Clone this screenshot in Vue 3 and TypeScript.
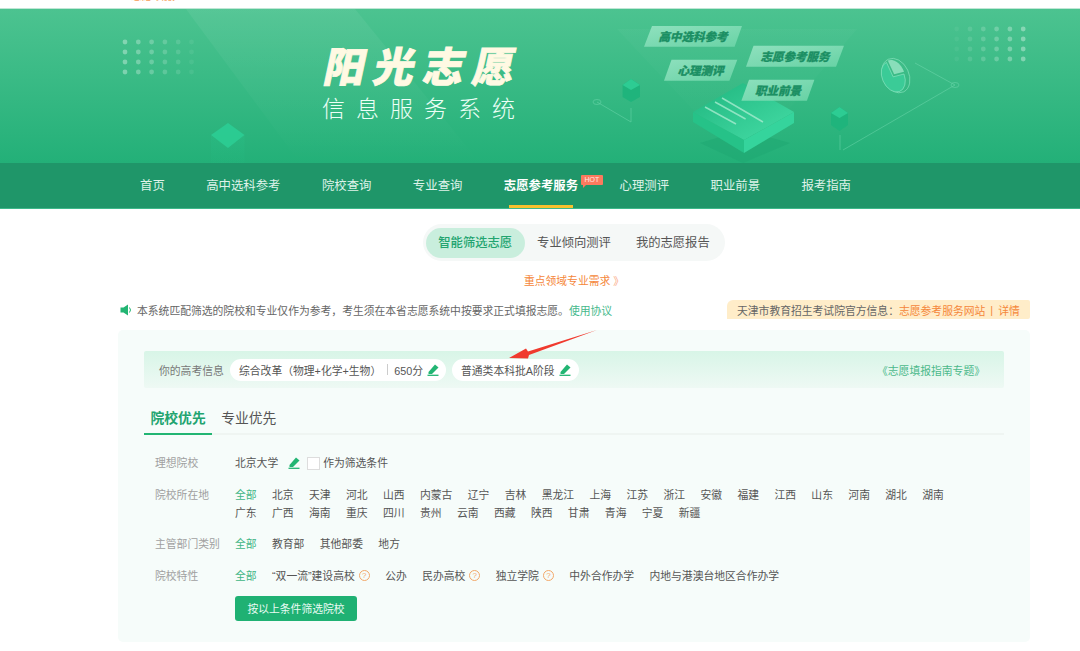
<script setup lang="ts">
interface FilterItem {
  name: string
  tip?: boolean
}

const navItems = ['首页', '高中选科参考', '院校查询', '专业查询', '志愿参考服务', '心理测评', '职业前景', '报考指南']
const activeNav = '志愿参考服务'
const subTabs = ['智能筛选志愿', '专业倾向测评', '我的志愿报告']

const regions: FilterItem[] = [
  '全部', '北京', '天津', '河北', '山西', '内蒙古', '辽宁', '吉林', '黑龙江', '上海', '江苏', '浙江', '安徽', '福建', '江西', '山东', '河南', '湖北', '湖南',
  '广东', '广西', '海南', '重庆', '四川', '贵州', '云南', '西藏', '陕西', '甘肃', '青海', '宁夏', '新疆',
].map((name) => ({ name }))

const departments: FilterItem[] = ['全部', '教育部', '其他部委', '地方'].map((name) => ({ name }))

const features: FilterItem[] = [
  { name: '全部' },
  { name: '“双一流”建设高校', tip: true },
  { name: '公办' },
  { name: '民办高校', tip: true },
  { name: '独立学院', tip: true },
  { name: '中外合作办学' },
  { name: '内地与港澳台地区合作办学' },
]

const filterRows = [
  { label: '院校所在地', items: regions },
  { label: '主管部门类别', items: departments },
  { label: '院校特性', items: features },
]

// banner decoration, coordinates are page pixels (viewBox starts at y=9)
const dotCols = [0, 1, 2, 3, 4, 5]
const dotRows = [0, 1, 2, 3]

const bannerTags = [
  { text: '高中选科参考', points: '644,46.7 652,26 742,26 734.6,46.7', x: 693, y: 40.5 },
  { text: '志愿参考服务', points: '746,66.7 753.5,45.7 844,45.7 836,66.7', x: 795, y: 60.5 },
  { text: '心理测评', points: '664,80.7 671.5,59.7 737.3,59.7 729.4,80.7', x: 700.5, y: 74.5 },
  { text: '职业前景', points: '741.4,100.7 749,79.7 814.4,79.7 806.9,100.7', x: 778, y: 94.5 },
]

const penPath = 'M1.5 8 L8 0.5 L11.5 3.5 L5 10 L1.5 10 Z'
</script>

<template>
  <div class="page">
    <div class="topbar"><span class="top-link">志愿填报</span></div>

    <header class="banner">
      <svg class="banner-art" viewBox="0 9 1080 154" xmlns="http://www.w3.org/2000/svg">
        <defs>
          <linearGradient id="spot" x1="0" y1="0" x2="0" y2="1">
            <stop offset="0" stop-color="#fff" stop-opacity="0.06" />
            <stop offset="1" stop-color="#fff" stop-opacity="0" />
          </linearGradient>
          <linearGradient id="beam" x1="0" y1="0" x2="0" y2="1">
            <stop offset="0" stop-color="#fff" stop-opacity="0.025" />
            <stop offset="1" stop-color="#fff" stop-opacity="0" />
          </linearGradient>
          <linearGradient id="bookTop" x1="0" y1="0" x2="1" y2="1">
            <stop offset="0" stop-color="#1fb57e" />
            <stop offset="1" stop-color="#45dda6" />
          </linearGradient>
          <linearGradient id="tagFill" x1="0" y1="0" x2="1" y2="1">
            <stop offset="0" stop-color="#9be6c6" />
            <stop offset="1" stop-color="#6fd6aa" />
          </linearGradient>
          <linearGradient id="cubeSide" x1="0" y1="0" x2="0" y2="1">
            <stop offset="0" stop-color="#27c48b" stop-opacity="0.8" />
            <stop offset="1" stop-color="#27c48b" stop-opacity="0.2" />
          </linearGradient>
        </defs>

        <!-- Background bands -->
        <polygon points="186,9 210,9 330,163 300,163" fill="url(#spot)" />
        <polygon points="210,9 355,9 480,163 330,163" fill="url(#spot)" />
        <polygon points="617,29 857,29 743,163" fill="url(#beam)" />

        <!-- Dots -->
        <g fill="#fff">
          <template v-for="c in dotCols" :key="c">
            <circle
              v-for="r in dotRows"
              :key="r"
              :cx="125 + c * 13.3"
              :cy="42 + r * 10"
              r="2.4"
              :opacity="0.34 - c * 0.055"
            />
            <circle
              v-for="r in dotRows"
              :key="'b' + r"
              :cx="956.7 + c * 13.3"
              :cy="29 + r * 10"
              r="2.4"
              :opacity="0.05 + c * 0.06"
            />
          </template>
        </g>

        <!-- Thin lines -->
        <g fill="none" stroke="#8be6c1" stroke-width="0.7" opacity="0.5">
          <path d="M597,102 L631,122 L631,108" />
          <path d="M915,63 L955,85 L843,150 M840,135 L840,150" />
          <ellipse cx="597" cy="102" rx="4" ry="2.5" />
          <ellipse cx="955" cy="85" rx="4" ry="2.5" />
        </g>

        <!-- Left cube -->
        <polygon points="211,135 228,148 244.5,135 244.5,163 211,163" fill="url(#cubeSide)" opacity="0.3" />
        <polygon points="228,123 244.5,135 228,148 211,135" fill="#2ccf95" opacity="0.85" />

        <!-- Small cubes -->
        <g>
          <polygon points="622.6,85 631,79 640,85 640,97 631,102 622.6,97" fill="#1fb47c" />
          <polygon points="622.6,85 631,90 640,85 631,79" fill="#2dcc93" />
          <polygon points="831,113 839.5,107 848,113 848,125 839.5,131 831,125" fill="#1fb47c" />
          <polygon points="831,113 839.5,118 848,113 839.5,107" fill="#2dcc93" />
        </g>

        <!-- Pie -->
        <g transform="rotate(-25 895 76)">
          <ellipse cx="896" cy="76" rx="13" ry="18" fill="none" stroke="#9eeccb" stroke-width="0.7" opacity="0.7" />
          <path d="M893,76 L893,60 A11,16 0 1 0 904,78 Z" fill="#3bcb97" stroke="#9eeccb" stroke-width="0.5" />
          <path d="M895,74 L895,59 A10,15 0 0 1 905,76 Z" fill="#a9ecd0" opacity="0.7" />
        </g>

        <!-- Book -->
        <polygon points="700,143 743,130 790,143 743,163" fill="#1fa873" opacity="0.6" />
        <polygon points="693,112 744,140 744,153 693,122" fill="#26c288" />
        <polygon points="744,140 794,112 794,123 744,153" fill="#35d49c" />
        <polygon points="693,112 743,83 794,112 744,140" fill="url(#bookTop)" />
        <g stroke="#a6eccf" stroke-width="1.5" opacity="0.8">
          <line x1="705" y1="107" x2="736" y2="124" />
          <line x1="715" y1="102" x2="745.6" y2="119" />
          <line x1="722" y1="98" x2="763" y2="122" />
        </g>

        <!-- Tags -->
        <g v-for="tag in bannerTags" :key="tag.text">
          <polygon :points="tag.points" fill="url(#tagFill)" opacity="0.85" />
          <text class="tag-text" :x="tag.x" :y="tag.y" text-anchor="middle">{{ tag.text }}</text>
        </g>
      </svg>

      <div class="brand">
        <div class="brand-title">阳光志愿</div>
        <div class="brand-sub">信息服务系统</div>
      </div>
    </header>

    <nav class="nav">
      <a v-for="item in navItems" :key="item" class="nav-item" :class="{ active: item === activeNav }">
        {{ item }}
        <span v-if="item === activeNav" class="hot">HOT</span>
      </a>
    </nav>

    <main class="main">
      <div class="sub-tabs">
        <span v-for="(tab, i) in subTabs" :key="tab" class="sub-tab" :class="{ active: i === 0 }">{{ tab }}</span>
      </div>

      <a class="focus-link">重点领域专业需求 <span class="chevrons">》</span></a>

      <div class="notice-row">
        <div class="notice">
          <svg class="speaker" viewBox="0 0 12 12" xmlns="http://www.w3.org/2000/svg">
            <path d="M0.5 3.5 H3.5 L8 0.5 V11.5 L3.5 8.5 H0.5 Z" fill="#22b573" />
            <path d="M9.5 3.5 Q11.5 6 9.5 8.5" fill="none" stroke="#22b573" stroke-width="1" />
          </svg>
          <span>本系统匹配筛选的院校和专业仅作为参考，考生须在本省志愿系统中按要求正式填报志愿。</span>
          <a class="green-link">使用协议</a>
        </div>
        <div class="official">
          天津市教育招生考试院官方信息：<a class="orange">志愿参考服务网站</a><i class="bar">|</i><a class="orange">详情</a>
        </div>
      </div>

      <section class="panel">
        <svg class="arrow" viewBox="0 0 90 30" xmlns="http://www.w3.org/2000/svg">
          <polygon points="89,0 20,21.5 18,18.5 1,28 20,28.5 21,25" fill="#f03a2e" />
        </svg>

        <div class="info-bar">
          <span class="info-label">你的高考信息</span>
          <div class="pill">
            <span>综合改革（物理+化学+生物）</span>
            <i class="pill-sep"></i>
            <span>650分</span>
            <svg class="pen" viewBox="0 0 12 12" xmlns="http://www.w3.org/2000/svg">
              <path :d="penPath" fill="#22b573" />
              <path d="M0.5 11.3 H11.5" stroke="#22b573" stroke-width="1.3" />
            </svg>
          </div>
          <div class="pill second">
            <span>普通类本科批A阶段</span>
            <svg class="pen" viewBox="0 0 12 12" xmlns="http://www.w3.org/2000/svg">
              <path :d="penPath" fill="#22b573" />
              <path d="M0.5 11.3 H11.5" stroke="#22b573" stroke-width="1.3" />
            </svg>
          </div>
          <a class="guide">《志愿填报指南专题》</a>
        </div>

        <div class="tabs">
          <span class="tab active">院校优先</span>
          <span class="tab">专业优先</span>
        </div>

        <div class="filters">
          <div class="row">
            <span class="row-label">理想院校</span>
            <div class="row-body ideal">
              <span>北京大学</span>
              <svg class="pen ideal-pen" viewBox="0 0 12 12" xmlns="http://www.w3.org/2000/svg">
                <path :d="penPath" fill="#22b573" />
                <path d="M0.5 11.3 H11.5" stroke="#22b573" stroke-width="1.3" />
              </svg>
              <i class="checkbox"></i>
              <span>作为筛选条件</span>
            </div>
          </div>

          <div v-for="row in filterRows" :key="row.label" class="row">
            <span class="row-label">{{ row.label }}</span>
            <div class="row-body options">
              <span v-for="(item, i) in row.items" :key="item.name" class="option" :class="{ current: i === 0 }">
                {{ item.name }}<i v-if="item.tip" class="tip">?</i>
              </span>
            </div>
          </div>

          <div class="row">
            <span class="row-label"></span>
            <button class="submit" type="button">按以上条件筛选院校</button>
          </div>
        </div>
      </section>
    </main>
  </div>
</template>

<style scoped>
.page {
  width: 1080px;
  height: 651px;
  overflow: hidden;
  background: #fff;
  font-family: "Liberation Sans", "Noto Sans CJK SC", sans-serif;
  font-size: 10.8px;
  color: #555;
}

a {
  text-decoration: none;
}

i {
  font-style: normal;
}

.topbar {
  height: 8px;
  padding-left: 131px;
  overflow: hidden;
  border-bottom: 1px solid #bfe6d5;
}

.top-link {
  display: block;
  margin-top: -11px;
  font-size: 11px;
  line-height: 14px;
  color: #f59a55;
}

.banner {
  position: relative;
  height: 154px;
  padding: 36px 0 0 320px;
  box-sizing: border-box;
  overflow: hidden;
  background: linear-gradient(180deg, #4cc390 0%, #23b078 100%);
}

.banner-art {
  position: absolute;
  left: 0;
  top: 0;
  width: 1080px;
  height: 154px;
}

.tag-text {
  font-size: 11.5px;
  font-weight: 900;
  font-style: italic;
  fill: #1b8f63;
  stroke: #1b8f63;
  stroke-width: 0.3px;
}

.brand {
  position: relative;
  width: 210px;
}

.brand-title {
  font-size: 41px;
  line-height: 46px;
  font-weight: 900;
  letter-spacing: 8.6px;
  white-space: nowrap;
  transform: skewX(-12deg);
  transform-origin: left bottom;
  color: #fff9e3;
  -webkit-text-stroke: 0.8px #fff9e3;
}

.brand-sub {
  margin-top: 3px;
  margin-left: 2px;
  font-size: 23px;
  line-height: 30px;
  font-weight: 300;
  letter-spacing: 11px;
  white-space: nowrap;
  color: #ecfff6;
}

.nav {
  display: flex;
  gap: 41.4px;
  height: 46px;
  padding-left: 140px;
  background: #1f9669;
  border-bottom: 1px solid #3db88a;
  box-sizing: border-box;
}

.nav-item {
  position: relative;
  line-height: 46px;
  font-size: 12.4px;
  color: #dff3ea;
}

.nav-item.active {
  font-weight: 700;
  color: #fff;
}

.nav-item.active::after {
  content: "";
  position: absolute;
  left: 5px;
  right: 5px;
  bottom: 0;
  height: 3px;
  background: #f7c12e;
}

.hot {
  position: absolute;
  left: 77px;
  top: 12px;
  width: 22px;
  height: 10px;
  border-radius: 1px;
  background: #fb7a5e;
  font-size: 7px;
  line-height: 10px;
  font-weight: 400;
  text-align: center;
  color: #ffe9e2;
}

.hot::after {
  content: "";
  position: absolute;
  left: 2px;
  top: 10px;
  border-top: 3px solid #fb7a5e;
  border-right: 3px solid transparent;
}

.main {
  display: flex;
  flex-direction: column;
  align-items: center;
  width: 912px;
  margin-left: 118px;
}

.sub-tabs {
  display: flex;
  align-items: center;
  height: 37px;
  margin-top: 15px;
  padding: 0 2.5px;
  border-radius: 19px;
  background: #f5f8f7;
  box-sizing: border-box;
}

.sub-tab {
  padding: 0 12.5px;
  font-size: 12.3px;
  line-height: 30px;
  color: #555;
}

.sub-tab.active {
  border-radius: 15px;
  background: #c9eedd;
  font-weight: 500;
  color: #22a46f;
}

.focus-link {
  margin-top: 12px;
  white-space: nowrap;
  line-height: 16px;
  color: #f5873a;
}

.chevrons {
  color: #f9ab85;
}

.notice-row {
  display: flex;
  align-items: center;
  justify-content: space-between;
  align-self: stretch;
  height: 19px;
  margin-top: 11px;
}

.notice {
  display: flex;
  align-items: center;
  margin-left: 2px;
  color: #666;
}

.speaker {
  width: 12px;
  height: 12px;
  margin-right: 5px;
}

.green-link {
  color: #45b98c;
}

.official {
  display: flex;
  align-items: center;
  width: 303px;
  height: 19px;
  padding-left: 10px;
  box-sizing: border-box;
  border-radius: 6px 2px 2px 0;
  background: #ffedc9;
  white-space: nowrap;
  color: #666;
}

.orange {
  color: #f5873a;
}

.bar {
  margin: 0 5px;
  color: #f5873a;
}

.panel {
  position: relative;
  align-self: stretch;
  height: 312px;
  margin-top: 11px;
  padding: 21px 26px;
  box-sizing: border-box;
  border-radius: 5px;
  background: #f6fcfa;
}

.arrow {
  position: absolute;
  left: 390px;
  top: 0;
  z-index: 2;
  width: 90px;
  height: 30px;
}

.info-bar {
  display: flex;
  align-items: center;
  height: 37px;
  padding: 0 19px 0 15px;
  border-radius: 2px;
  background: linear-gradient(180deg, #d8f5e7 0%, #eef9f4 100%);
}

.info-label {
  width: 71px;
  color: #777;
}

.pill {
  display: flex;
  align-items: center;
  width: 216px;
  height: 22px;
  padding-left: 9px;
  box-sizing: border-box;
  border-radius: 11px;
  background: #fff;
  white-space: nowrap;
  color: #555;
}

.pill.second {
  width: 127px;
  margin-left: 6px;
}

.pill-sep {
  width: 1px;
  height: 11px;
  margin: 0 6px;
  background: #ccc;
}

.pen {
  flex: none;
  width: 12px;
  height: 12px;
  margin-left: 4px;
}

.guide {
  margin-left: auto;
  color: #4cb98b;
}

.tabs {
  display: flex;
  height: 32px;
  margin-top: 15px;
  padding-top: 1px;
  box-sizing: border-box;
  border-bottom: 2px solid #eff5f2;
}

.tab {
  height: 31px;
  padding: 0 6.5px;
  margin-right: 2.5px;
  font-size: 13.8px;
  line-height: 29px;
  box-sizing: border-box;
  color: #555;
}

.tab.active {
  border-bottom: 2px solid #22b573;
  font-weight: 700;
  color: #22a46f;
}

.filters {
  display: flex;
  flex-direction: column;
  gap: 13.5px;
  margin-top: 19px;
  padding-left: 11px;
}

.row {
  display: flex;
  line-height: 18px;
}

.row-label {
  flex: none;
  width: 80px;
  color: #a0a0a0;
}

.row-body {
  display: flex;
  align-items: center;
}

.ideal-pen {
  margin: 0 7px 0 10px;
}

.checkbox {
  width: 11px;
  height: 11px;
  margin-right: 3px;
  border: 1px solid #ddd;
  background: #fff;
}

.options {
  flex-wrap: wrap;
  column-gap: 15.4px;
  width: 730px;
}

.option {
  display: flex;
  align-items: center;
  white-space: nowrap;
}

.option.current {
  color: #3fb585;
}

.tip {
  width: 9px;
  height: 9px;
  margin-left: 4px;
  border: 1px solid #f3a869;
  border-radius: 50%;
  font-size: 8px;
  line-height: 9px;
  text-align: center;
  color: #f3a869;
}

.submit {
  width: 122px;
  height: 25px;
  margin-top: -2px;
  padding: 0;
  border: 0;
  border-radius: 3px;
  background: #1fb173;
  font: inherit;
  color: #e9fbf3;
}
</style>

<style>
html,
body {
  overflow: hidden;
}
</style>
